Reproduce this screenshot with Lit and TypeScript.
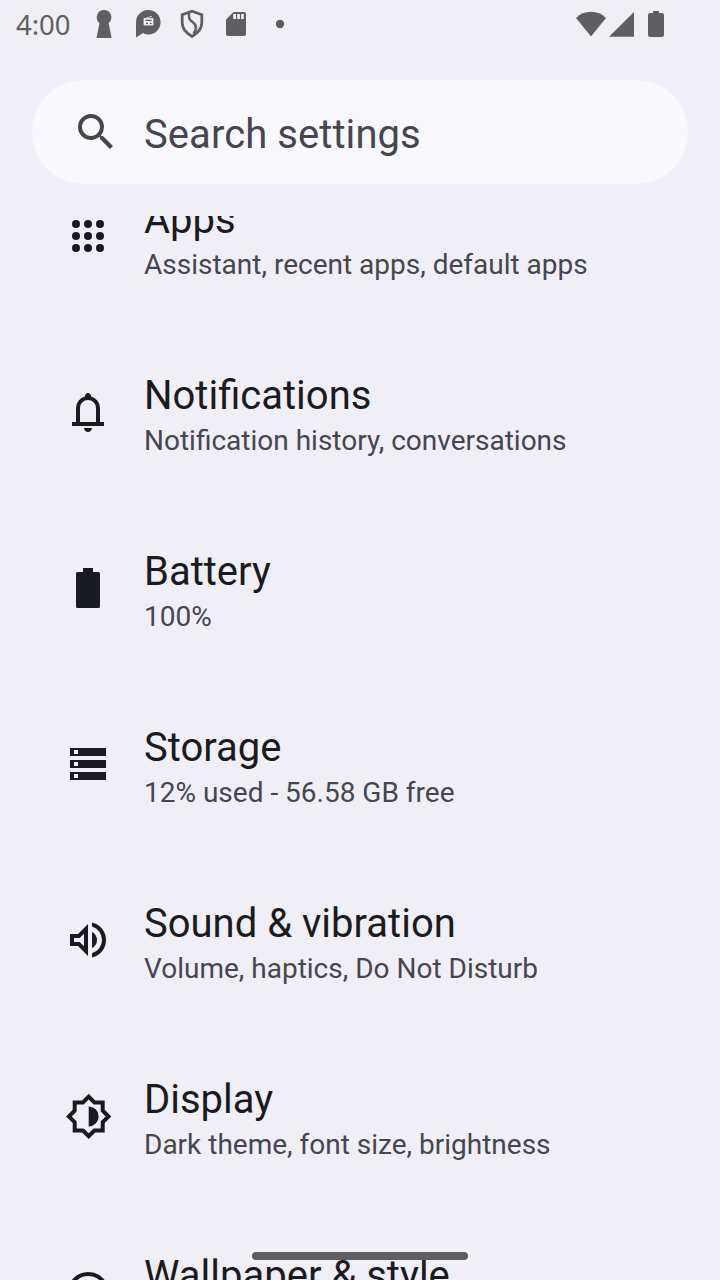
import { LitElement, html, css, svg } from "lit";
import { customElement, property } from "lit/decorators.js";

const icons: Record<string, unknown> = {
  apps: svg`${[6, 12, 18].map((y) => [6, 12, 18].map((x) => svg`<circle cx=${x} cy=${y} r="2"></circle>`))}`,
  bell: svg`<path d="M4 19v-2h2v-7q0-2.075 1.25-3.687Q8.5 4.7 10.5 4.2v-.2q0-.625.438-1.062Q11.375 2.5 12 2.5t1.063.438q.437.437.437 1.062v.2q2 .5 3.25 2.113Q18 7.925 18 10v7h2v2ZM12 22q-.825 0-1.412-.587Q10 20.825 10 20h4q0 .825-.587 1.413Q12.825 22 12 22Zm-4-5h8v-7q0-1.65-1.175-2.825Q13.65 6 12 6q-1.65 0-2.825 1.175Q8 8.35 8 10Z"></path>`,
  battery: svg`<path d="M9.5 2h5v2h2.7q.8 0 .8.8v16.4q0 .8-.8.8H6.8q-.8 0-.8-.8V4.800q0-.8.8-.8h2.700z"></path>`,
  storage: svg`<path fill-rule="evenodd" d="M3 4h18v4H3zM5 5v2h2V5zM3 10h18v4H3zM5 11v2h2v-2zM3 16h18v4H3zM5 17v2h2v-2z"></path>`,
  volume: svg`<path d="M14 20.725v-2.05q2.25-.65 3.625-2.5t1.375-4.2q0-2.35-1.375-4.2T14 5.275v-2.05q3.1.7 5.05 3.138Q21 8.8 21 11.975q0 3.175-1.95 5.612-1.95 2.438-5.05 3.138ZM3 15V9h4l5-5v16l-5-5Zm11 1V7.95q1.125.525 1.813 1.625.687 1.1.687 2.425 0 1.325-.687 2.4Q15.125 15.475 14 16Zm-4-7.15L7.85 11H5v2h2.850L10 15.150Z"></path>`,
  display: svg`<path fill-rule="evenodd" transform="translate(.35 .2)" d="M20 8.690V4h-4.690L12 .69 8.690 4H4v4.690L.69 12 4 15.310V20h4.690L12 23.310 15.310 20H20v-4.690L23.310 12zM18 14.480V18h-3.520L12 20.480 9.520 18H6v-3.520L3.520 12 6 9.520V6h3.520L12 3.520 14.480 6H18v3.520L20.480 12zM12 7v10a5 5 0 0 0 0-10z"></path>`,
  palette: svg`<path fill-rule="evenodd" d="M12 2a10 10 0 0 0 0 20c1.400 0 2.500-1.100 2.500-2.500 0-1-.6-1.500-.6-2 0-.3.2-.5.6-.5H16c3.300 0 6-2.700 6-6 0-5-4.500-9-10-9zm0 2c4.400 0 8 3.100 8 7 0 2.200-1.800 4-4 4h-1.500c-2.300 0-3.300 2.400-2 4.500.2.3 0 .5-.5.5a8 8 0 0 1 0-16z"></path><circle cx="6.500" cy="11.500" r="1.500"></circle><circle cx="9.500" cy="7.500" r="1.500"></circle><circle cx="14.500" cy="7.500" r="1.500"></circle><circle cx="17.500" cy="11.500" r="1.500"></circle>`,
  search: svg`<path d="M15.500 14h-.79l-.28-.27A6.471 6.471 0 0 0 16 9.500 6.500 6.500 0 1 0 9.500 16c1.610 0 3.090-.59 4.230-1.570l.27.28v.79l5 4.990L20.490 19l-4.990-5zm-6 0C7.010 14 5 11.990 5 9.500S7.010 5 9.500 5 14 7.010 14 9.500 11.990 14 9.500 14z"></path>`,
};

@customElement("setting-row")
class SettingRow extends LitElement {
  @property() icon = "";
  @property() label = "";
  @property() summary = "";

  static styles = css`
    :host {
      display: grid;
      grid-template-columns: 48px 1fr;
      column-gap: 32px;
      align-items: center;
      height: 176px;
      flex: none;
      padding: 0 64px;
      box-sizing: border-box;
    }
    .icon { width: 48px; height: 48px; fill: #1a1b20; display: block; }
    .label { font-size: 40px; line-height: 47px; color: #1a1b20; }
    .summary { font-size: 28px; line-height: 33px; margin-top: 5px; color: #45464f; }
    .text { white-space: nowrap; padding-top: 5px; }
  `;

  render() {
    return html`
      <svg class="icon" viewBox="0 0 24 24">${icons[this.icon]}</svg>
      <div class="text">
        <div class="label">${this.label}</div>
        <div class="summary">${this.summary}</div>
      </div>
    `;
  }
}

@customElement("status-bar")
class StatusBar extends LitElement {
  static styles = css`
    :host {
      display: flex;
      justify-content: space-between;
      height: 48px;
      padding: 0 52px 0 16px;
      color: #5f5f61;
      box-sizing: border-box;
    }
    .side { display: flex; align-items: center; }
    .clock { font: 27.5px/48px "Noto Sans", sans-serif; width: 66px; padding-top: 2px; }
    svg { display: block; fill: currentColor; }
  `;

  render() {
    return html`
      <div class="side">
        <div class="clock">4:00</div>
        <svg width="220" height="48" viewBox="82 0 220 48">
          <path d="M104 10a7.300 7.300 0 0 1 4.600 13l3 15H96.500l3-15A7.300 7.300 0 0 1 104 10z"></path>
          <path d="M136 37.500V23a12.300 12.300 0 1 1 12.500 11.500q-3 0-5.500-1.500z"></path>
          <path d="M144 18.500h9v6.500h-9zM146 18l6-1.700" fill="#f0eff5" stroke="#f0eff5" stroke-width=".8"></path>
          <path d="M145.500 20.300h6M146 23.300h2M150 23.300h1.500" stroke="#5f5f61" stroke-width="1.200"></path>
          <g fill="none" stroke="currentColor" stroke-width="2.800">
            <path d="M192 11.300l9.800 3.500v8q0 8-9.800 13.700-9.800-5.700-9.800-13.700v-8z"></path>
            <path d="M189 13v4q0 2.500 3.500 5t3.500 5.500q0 3-2.500 6" stroke-width="2.400"></path>
          </g>
          <path d="M233.500 12H244q2 0 2 2v20q0 2-2 2h-16q-2 0-2-2V19.500z"></path>
          <path d="M233.300 14h2.700v5h-2.700zM237.200 14h2.700v5h-2.700zM241.100 14h2.700v5h-2.700z" fill="#f0eff5"></path>
          <circle cx="280" cy="24" r="4.200"></circle>
        </svg>
      </div>
      <div class="side">
        <svg width="92" height="48" viewBox="576 0 92 48">
          <path d="M591 36.500L576 18Q582 11.700 591 11.700T606 18z"></path>
          <path d="M609 36.700L634 12v24.700z"></path>
          <path d="M653 11h6v2h3q2 0 2 2v20q0 2-2 2h-12q-2 0-2-2V15q0-2 2-2h3z"></path>
        </svg>
      </div>
    `;
  }
}

@customElement("app-root")
class AppRoot extends LitElement {
  static styles = css`
    :host {
      display: flex;
      flex-direction: column;
      position: relative;
      width: 720px;
      height: 1280px;
      overflow: hidden;
      background: #f0eff5;
      font-family: Roboto, sans-serif;
    }
    .search {
      display: flex;
      align-items: center;
      gap: 24px;
      height: 104px;
      margin: 32px 32px;
      padding: 0 40px;
      box-sizing: border-box;
      border-radius: 52px;
      background: #f9f8ff;
      color: #45464f;
      font-size: 40px;
      line-height: 48px;
      flex: none;
    }
    .search svg { width: 48px; height: 48px; fill: currentColor; }
    .placeholder { padding-top: 6px; letter-spacing: 0.07px; }
    .list {
      flex: 1;
      min-height: 0;
      overflow: hidden;
      display: flex;
      flex-direction: column;
    }
    .first { margin-top: -68px; }
    .handle {
      position: absolute;
      left: 252px;
      bottom: 20px;
      width: 216px;
      height: 8px;
      border-radius: 4px;
      background: #5f5f61;
    }
  `;

  private rows = [
    ["apps", "Apps", "Assistant, recent apps, default apps"],
    ["bell", "Notifications", "Notification history, conversations"],
    ["battery", "Battery", "100%"],
    ["storage", "Storage", "12% used - 56.58 GB free"],
    ["volume", "Sound & vibration", "Volume, haptics, Do Not Disturb"],
    ["display", "Display", "Dark theme, font size, brightness"],
    ["palette", "Wallpaper & style", "Colors, themed icons, app grid"],
  ];

  render() {
    return html`
      <status-bar></status-bar>
      <div class="search">
        <svg viewBox="0 0 24 24">${icons.search}</svg>
        <span class="placeholder">Search settings</span>
      </div>
      <div class="list">
        ${this.rows.map(
          ([icon, label, summary], i) => html`<setting-row
            class=${i === 0 ? "first" : ""}
            icon=${icon}
            label=${label}
            summary=${summary}
          ></setting-row>`
        )}
      </div>
      <div class="handle"></div>
    `;
  }
}
